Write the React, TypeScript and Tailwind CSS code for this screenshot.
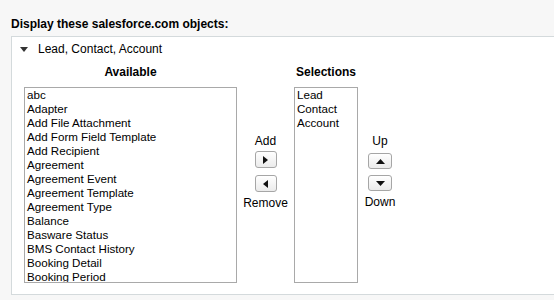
import React from "react";

const available = [
  "abc",
  "Adapter",
  "Add File Attachment",
  "Add Form Field Template",
  "Add Recipient",
  "Agreement",
  "Agreement Event",
  "Agreement Template",
  "Agreement Type",
  "Balance",
  "Basware Status",
  "BMS Contact History",
  "Booking Detail",
  "Booking Period",
];

const selections = ["Lead", "Contact", "Account"];

function ArrowButton({ dir, wide }: { dir: "left" | "right" | "up" | "down"; wide?: boolean }) {
  let pts = "";
  let w = 5;
  let h = 8;
  if (dir === "right") pts = "0,0 5,4 0,8";
  if (dir === "left") pts = "5,0 0,4 5,8";
  if (dir === "up") {
    w = 9;
    h = 5;
    pts = "0,5 4.5,0 9,5";
  }
  if (dir === "down") {
    w = 9;
    h = 5;
    pts = "0,0 9,0 4.5,5";
  }
  return (
    <div
      className={`${wide ? "w-[24px] h-[16px]" : "w-[22px] h-[17px]"} rounded-[3px] border border-[#a6a6a6] bg-gradient-to-b from-white to-[#ebebeb] flex items-center justify-center`}
    >
      <svg width={w} height={h} viewBox={`0 0 ${w} ${h}`}>
        <polygon points={pts} fill="#111" />
      </svg>
    </div>
  );
}

export default function App() {
  return (
    <div
      className="w-[554px] h-[300px] bg-[#f7f7f7] text-[#000] overflow-hidden"
      style={{ fontFamily: '"Liberation Sans", Arial, sans-serif' }}
    >
      <div className="pt-[17px] pl-[11px] text-[12px] leading-[15px] font-bold">
        Display these salesforce.com objects:
      </div>
      <div className="mt-[4px] ml-[11px] border-y border-l border-[#d4dadc] bg-white h-[259px]">
        <div className="h-[24px] flex items-center pl-[8px] text-[12px]">
          <svg width="8" height="5" viewBox="0 0 8 5" className="mr-[10px]">
            <polygon points="0,0 8,0 4,5" fill="#333" />
          </svg>
          <span>Lead, Contact, Account</span>
        </div>
        <div className="flex pl-[12px] pt-[4px]">
          <div className="w-[213px] flex flex-col">
            <div className="h-[14px] leading-[14px] text-[12px] font-bold text-center mb-[8px]">Available</div>
            <div className="h-[196px] border border-[#a9a9a9] bg-white pl-[2px] overflow-hidden">
              {available.map((a) => (
                <div key={a} className="h-[14px] leading-[14px] text-[11.6px]">
                  {a}
                </div>
              ))}
            </div>
          </div>
          <div className="w-[57px] flex flex-col items-center pt-[69px] text-[12px]">
            <div className="leading-[14px]">Add</div>
            <div className="mt-[3px]">
              <ArrowButton dir="right" />
            </div>
            <div className="mt-[7px]">
              <ArrowButton dir="left" />
            </div>
            <div className="leading-[14px] mt-[4px]">Remove</div>
          </div>
          <div className="w-[64px] flex flex-col">
            <div className="h-[14px] leading-[14px] text-[12px] font-bold text-center mb-[8px] whitespace-nowrap">
              Selections
            </div>
            <div className="h-[196px] border border-[#a9a9a9] bg-white pl-[2px] overflow-hidden">
              {selections.map((a) => (
                <div key={a} className="h-[14px] leading-[14px] text-[11.6px]">
                  {a}
                </div>
              ))}
            </div>
          </div>
          <div className="w-[44px] flex flex-col items-center pt-[69px] text-[12px]">
            <div className="leading-[14px]">Up</div>
            <div className="mt-[5px]">
              <ArrowButton dir="up" wide />
            </div>
            <div className="mt-[6px]">
              <ArrowButton dir="down" wide />
            </div>
            <div className="leading-[14px] mt-[4px]">Down</div>
          </div>
        </div>
      </div>
    </div>
  );
}
